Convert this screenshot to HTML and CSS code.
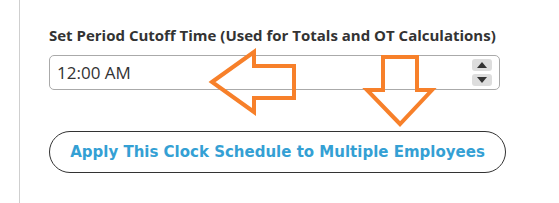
FILE: index.html
```html
<!DOCTYPE html>
<html>
<head>
<meta charset="utf-8">
<link rel="stylesheet" href="styles.css">
</head>
<body>
<div class="page">
  <div class="panel">
    <label class="field-label">Set Period Cutoff Time (Used for Totals and OT Calculations)</label>
    <div class="time-input">
      <span class="time-value">12:00 AM</span>
      <div class="spinner">
        <span class="spin-btn"><svg width="10" height="6" viewBox="0 0 10 6"><polygon points="5,0 10,6 0,6" fill="#333"/></svg></span>
        <span class="spin-btn"><svg width="10" height="6" viewBox="0 0 10 6"><polygon points="0,0 10,0 5,6" fill="#333"/></svg></span>
      </div>
    </div>
    <button class="apply-btn">Apply This Clock Schedule to Multiple Employees</button>
  </div>
  <svg class="annotations" width="559" height="203" viewBox="0 0 559 203">
    <polygon points="212,82 254,52 254,66 294,66 294,98 254,98 254,112" fill="none" stroke="#f7802a" stroke-width="4" stroke-linejoin="miter"/>
    <polygon points="383,57 417,57 417,90 432,90 400,124 367,90 383,90" fill="none" stroke="#f7802a" stroke-width="4" stroke-linejoin="miter"/>
  </svg>
</div>
</body>
</html>
```
FILE: styles.css
```css
html, body {
  margin: 0;
  padding: 0;
  background: #fff;
}
.page {
  position: relative;
  width: 559px;
  height: 203px;
  overflow: hidden;
}
.panel {
  margin-left: 19px;
  height: 203px;
  border-left: 1px solid #cfcfcf;
  padding: 25px 0 0 29px;
  box-sizing: border-box;
  display: flex;
  flex-direction: column;
  align-items: flex-start;
}
.field-label {
  font-family: "Open Sans", sans-serif;
  font-weight: 700;
  font-size: 15px;
  line-height: 20px;
  color: #333;
}
.time-input {
  margin-top: 10px;
  width: 451px;
  height: 35px;
  box-sizing: border-box;
  border: 1px solid #aaa;
  border-radius: 5px;
  display: flex;
  align-items: center;
  justify-content: space-between;
  padding: 0 7px 0 7px;
}
.time-value {
  font-family: "Open Sans", sans-serif;
  font-size: 17px;
  color: #333;
}
.spinner {
  display: flex;
  flex-direction: column;
  gap: 3px;
}
.spin-btn {
  width: 20px;
  height: 12px;
  background: #ddd;
  border-radius: 3px;
  display: flex;
  align-items: center;
  justify-content: center;
}
.apply-btn {
  margin-top: 41px;
  width: 457px;
  height: 42px;
  border: 1px solid #333;
  border-radius: 21px;
  background: #fff;
  font-family: "DejaVu Sans", Verdana, sans-serif;
  font-weight: 700;
  font-size: 15px;
  color: #34a0d4;
  padding: 0;
}
.annotations {
  position: absolute;
  left: 0;
  top: 0;
}
```
